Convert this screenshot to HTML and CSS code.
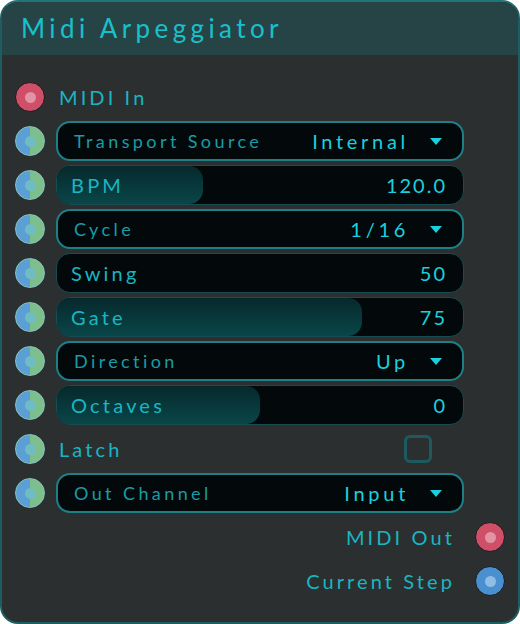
FILE: index.html
```html
<!DOCTYPE html>
<html>
<head>
<meta charset="utf-8">
<link rel="stylesheet" href="styles.css">
</head>
<body>
<div class="node">
  <div class="header"><span class="title">Midi Arpeggiator</span></div>
  <div class="body">
    <div class="row">
      <span class="port port-midi"></span>
      <span class="label">MIDI In</span>
    </div>
    <div class="row">
      <span class="port port-mix"></span>
      <div class="combo"><span class="clabel">Transport Source</span><span class="cval">Internal</span><span class="arrow"></span></div>
    </div>
    <div class="row">
      <span class="port port-mix"></span>
      <div class="slider"><div class="fill" style="width:36%"></div><span class="slabel">BPM</span><span class="sval">120.0</span></div>
    </div>
    <div class="row">
      <span class="port port-mix"></span>
      <div class="combo"><span class="clabel">Cycle</span><span class="cval">1/16</span><span class="arrow"></span></div>
    </div>
    <div class="row">
      <span class="port port-mix"></span>
      <div class="slider"><div class="fill" style="width:0%"></div><span class="slabel">Swing</span><span class="sval">50</span></div>
    </div>
    <div class="row">
      <span class="port port-mix"></span>
      <div class="slider"><div class="fill" style="width:75%"></div><span class="slabel">Gate</span><span class="sval">75</span></div>
    </div>
    <div class="row">
      <span class="port port-mix"></span>
      <div class="combo"><span class="clabel">Direction</span><span class="cval">Up</span><span class="arrow"></span></div>
    </div>
    <div class="row">
      <span class="port port-mix"></span>
      <div class="slider"><div class="fill" style="width:50%"></div><span class="slabel">Octaves</span><span class="sval">0</span></div>
    </div>
    <div class="row">
      <span class="port port-mix"></span>
      <div class="latch"><span class="label">Latch</span><span class="check"></span></div>
    </div>
    <div class="row">
      <span class="port port-mix"></span>
      <div class="combo"><span class="clabel">Out Channel</span><span class="cval">Input</span><span class="arrow"></span></div>
    </div>
    <div class="row out">
      <span class="label">MIDI Out</span>
      <span class="port port-midi"></span>
    </div>
    <div class="row out">
      <span class="label">Current Step</span>
      <span class="port port-blue"></span>
    </div>
  </div>
</div>
</body>
</html>
```
FILE: styles.css
```css
html, body {
  margin: 0;
  padding: 0;
  background: #ffffff;
}
body {
  width: 520px;
  height: 624px;
  font-family: "Lato", "Open Sans", sans-serif;
}
.node {
  box-sizing: border-box;
  width: 520px;
  height: 624px;
  border: 2px solid #1e5e62;
  border-top-color: #217478;
  border-radius: 18px;
  background: #2b2f30;
  overflow: hidden;
}
.header {
  height: 53px;
  background: #264446;
  display: flex;
  align-items: center;
  padding-left: 19px;
}
.title {
  color: #18c0cc;
  font-size: 26px;
  letter-spacing: 4.4px;
  margin-top: -2px;
}
.body {
  padding: 20px 13px 0 13px;
  display: flex;
  flex-direction: column;
}
.row {
  height: 44px;
  display: flex;
  align-items: center;
  gap: 11px;
}
.row.out {
  justify-content: flex-end;
  gap: 20px;
}
.label {
  color: #18b6c2;
  font-size: 20px;
  letter-spacing: 3.1px;
  margin-left: 3px;
}
.port {
  box-sizing: border-box;
  flex: none;
  width: 30px;
  height: 30px;
  border-radius: 50%;
  position: relative;
}
.port::after {
  content: "";
  position: absolute;
  left: 50%;
  top: 50%;
  width: 11px;
  height: 11px;
  margin: -5.5px 0 0 -5.5px;
  border-radius: 50%;
}
.port-midi {
  background: #cf4e68;
  border: 1.5px solid #1a1a1a;
}
.port-midi::after { background: #e394a4; }
.port-blue {
  background: #4a8fd0;
  border: 1.5px solid #1a1a1a;
}
.port-blue::after { background: #8fbde6; }
.port-mix {
  background: linear-gradient(to right, #5b9fd6 50%, #7dbe8d 50%);
  border: 1.5px solid #86c6c0;
}
.port-mix::after { background: #6fbdc2; }
.combo {
  box-sizing: border-box;
  width: 408px;
  height: 40px;
  border: 2px solid #1d8087;
  border-radius: 14px;
  background: #03080a;
  display: flex;
  align-items: center;
  padding: 0 20px 0 16px;
}
.clabel {
  color: #1a9ca5;
  font-size: 18px;
  letter-spacing: 3.4px;
  flex: 1;
}
.cval {
  color: #1ad0de;
  font-size: 20px;
  letter-spacing: 3.7px;
  margin-right: 21px;
}
.arrow {
  width: 0;
  height: 0;
  border-left: 6px solid transparent;
  border-right: 6px solid transparent;
  border-top: 7px solid #1ad0de;
}
.slider {
  box-sizing: border-box;
  width: 408px;
  height: 40px;
  border: 1px solid #174c52;
  border-radius: 14px;
  background: #03080a;
  position: relative;
  display: flex;
  align-items: center;
  padding: 0 16px 0 14px;
  overflow: hidden;
}
.fill {
  position: absolute;
  left: 0;
  top: 0;
  bottom: 0;
  border-radius: 0 14px 14px 0;
  background: linear-gradient(to bottom, #06292c, #0a4649);
}
.slabel {
  position: relative;
  color: #18b6c2;
  font-size: 20px;
  letter-spacing: 3.2px;
  flex: 1;
}
.sval {
  position: relative;
  color: #1ad0de;
  font-size: 20px;
  letter-spacing: 2px;
}
.latch {
  width: 408px;
  display: flex;
  align-items: center;
  justify-content: space-between;
}
.latch .label { margin-left: 3px; }
.check {
  box-sizing: border-box;
  width: 28px;
  height: 28px;
  border: 3px solid #1c5a5f;
  border-radius: 6px;
  margin-right: 32px;
}
```
